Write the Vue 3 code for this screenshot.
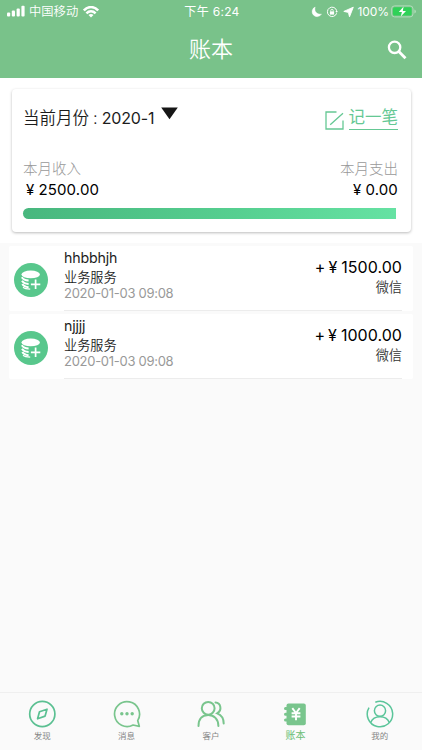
<script setup>
const records = [
  { name: 'hhbbhjh', type: '业务服务', time: '2020-01-03 09:08', amount: '1500.00', channel: '微信' },
  { name: 'njjjj', type: '业务服务', time: '2020-01-03 09:08', amount: '1000.00', channel: '微信' },
]
const tabs = [
  { key: 'discover', label: '发现' },
  { key: 'message', label: '消息' },
  { key: 'customer', label: '客户' },
  { key: 'ledger', label: '账本', active: true },
  { key: 'mine', label: '我的' },
]
</script>

<template>
  <div class="screen">
    <header class="header">
      <div class="status">
        <div class="status-left">
          <svg class="signal" width="18" height="12" viewBox="0 0 18 12" fill="#fff">
            <rect x="0" y="7.6" width="3.2" height="4" rx="1" /><rect x="4.8" y="5.6" width="3.2" height="6" rx="1" />
            <rect x="9.6" y="3.4" width="3.2" height="8.2" rx="1" /><rect x="14.4" y="0.8" width="3.2" height="10.8" rx="1" />
          </svg>
          <span class="carrier">中国移动</span>
          <svg width="16" height="12" viewBox="0 0 16 12" fill="none" stroke="#fff" stroke-width="2.5">
            <path d="M.8 4.500C5-.1 11-.1 15.200 4.500" /><path d="M3.400 7.300C6.100 4.600 9.900 4.600 12.600 7.300" />
            <path d="M8 11.500L5.500 9Q8 6.800 10.500 9Z" fill="#fff" stroke="none" />
          </svg>
        </div>
        <div class="clock">下午 6:24</div>
        <div class="status-right">
          <svg width="11" height="12" viewBox="0 0 11 12"><path d="M4.200 1A5 5 0 1 0 10.500 8C7 9 2.600 6 4.200 1Z" fill="#fff" stroke="#fff" stroke-width=".4" /></svg>
          <svg class="lock" width="12" height="12" viewBox="0 0 12 12" fill="none" stroke="#fff">
            <path d="M10.600 7.300A4.700 4.700 0 1 1 10.700 4.800" /><path d="M9.300 5.100h2.500l-1 1.700z" fill="#fff" stroke="none" />
            <rect x="3.900" y="5.400" width="4.200" height="3.200" fill="#fff" stroke="none" /><path d="M4.800 5.600V4.500a1.200 1.200 0 0 1 2.400 0v1.100" stroke-width=".8" />
          </svg>
          <svg class="arrow" width="11" height="12" viewBox="0 0 11 12"><path d="M10.300 1.200L6.500 10.800L5.400 6.400L.8 5.400Z" fill="#fff" stroke="#fff" stroke-width=".9" stroke-linejoin="round" /></svg>
          <span class="percent">100%</span>
          <svg class="battery" width="26" height="13" viewBox="0 0 26 13">
            <rect x=".6" y=".9" width="21.400" height="11" rx="3" fill="none" stroke="#b2dcba" stroke-width="1" />
            <rect x="2" y="2.300" width="18.600" height="8.200" rx="1.600" fill="#30d158" />
            <path d="M23.400 4.500v4q1.500-.7 1.500-2t-1.500-2z" fill="#b2dcba" />
            <path d="M12.600 1.500L7.800 7H10.900L9.800 11.600L15 5.900H11.800Z" fill="#fff" />
          </svg>
        </div>
      </div>
      <div class="titlebar">
        <h1>账本</h1>
        <svg class="search" width="20" height="20" viewBox="0 0 20 20" fill="none" stroke="#fff">
          <circle cx="7.600" cy="7.300" r="5.700" stroke-width="2.300" /><path d="M11.800 11.500L18.500 18.200" stroke-width="2.800" />
        </svg>
      </div>
    </header>

    <section class="summary">
      <div class="card">
        <div class="month-row">
          <div class="month">当前月份<span class="colon">:</span><span class="date">2020-1</span>
            <svg class="caret" width="17" height="13" viewBox="0 0 17 13"><path d="M.2.4H16.800L8.500 12.200Z" fill="#161616" /></svg>
          </div>
          <div class="add">
            <svg width="19" height="19" viewBox="0 0 19 19" fill="none" stroke="#65c894" stroke-width="1.300">
              <path d="M11.500 1H1V18H18V9.500M5.200 13.800L18 2.200" />
            </svg>
            <span class="add-text">记一笔</span>
          </div>
        </div>
        <div class="totals">
          <div><div class="label">本月收入</div><div class="sum"><span class="yen">¥</span>2500.00</div></div>
          <div class="right"><div class="label">本月支出</div><div class="sum"><span class="yen">¥</span>0.00</div></div>
        </div>
        <div class="bar"></div>
      </div>
    </section>

    <main class="list">
      <article v-for="r in records" :key="r.name" class="item">
        <svg class="coin" width="34" height="34" viewBox="0 0 34 34">
          <circle cx="17" cy="17" r="17" fill="#58c78c" />
          <ellipse cx="16.700" cy="11.400" rx="9.200" ry="3.900" fill="#fff" />
          <g fill="none" stroke="#fff" stroke-width="2">
            <path d="M7.800 14.300Q9.800 17.400 14.600 17.500" /><path d="M8 17.700Q9.800 20.700 14.600 20.900" />
            <path d="M8.300 21.100Q10 24 14.600 24.200" /><path d="M9 24.300Q11 26 16.200 26.200" stroke-width="1.300" />
            <path d="M16.900 21.300H26.300M21.600 16.600V26" stroke-width="1.700" />
          </g>
        </svg>
        <div class="detail">
          <div class="info">
            <div class="name">{{ r.name }}</div>
            <div class="type">{{ r.type }}</div>
            <div class="time">{{ r.time }}</div>
          </div>
          <div class="pay">
            <div class="amount">+<span class="yen">¥</span>{{ r.amount }}</div>
            <div class="channel">{{ r.channel }}</div>
          </div>
        </div>
      </article>
    </main>

    <nav class="tabs">
      <div v-for="t in tabs" :key="t.key" class="tab" :class="{ active: t.active }">
        <svg v-if="t.key === 'discover'" width="28" height="28" viewBox="0 0 28 28" fill="none" stroke="#5bc092" stroke-width="1.700">
          <circle cx="14.300" cy="14" r="12.600" /><path d="M19 9.200L17.100 16.100L9.600 18.800L11.500 11.800Z" stroke-linejoin="round" />
        </svg>
        <svg v-else-if="t.key === 'message'" width="28" height="28" viewBox="0 0 28 28" fill="none" stroke="#79c58d" stroke-width="1.700">
          <path d="M24.700 20.600A12.500 12.500 0 1 0 20.100 25L26.300 26.300Z" stroke-linejoin="round" />
          <g fill="#79c58d" stroke="none"><circle cx="8.800" cy="13.700" r="1.700" /><circle cx="14" cy="13.700" r="1.700" /><circle cx="19.200" cy="13.700" r="1.700" /></g>
        </svg>
        <svg v-else-if="t.key === 'customer'" width="28" height="28" viewBox="0 0 28 28" fill="none" stroke="#79c58d" stroke-width="2" stroke-linecap="round">
          <circle cx="11.200" cy="8.300" r="6.400" /><path d="M1.500 26C1.500 18.600 5.500 15 11.200 15S21.400 19 21.400 26M18.500 2.600C23.800 3 25.500 9.900 20.200 13.400C24.500 15.100 26.700 18.300 26.700 23.500" />
        </svg>
        <svg v-else-if="t.key === 'ledger'" class="book" width="28" height="28" viewBox="0 0 28 28">
          <rect x="5.500" y="3.500" width="19.300" height="21.700" rx="2" fill="#79c58d" />
          <path d="M4.500 8.500H6.500M4.500 14.200H6.500M4.500 20H6.500" stroke="#79c58d" stroke-width="3" stroke-linecap="round" />
          <path d="M11.300 8.200L15 13L18.700 8.200M15 13V20.300M10.600 13.200H19.400M10.600 16.500H19.400" fill="none" stroke="#fff" stroke-width="1.900" />
        </svg>
        <svg v-else width="28" height="28" viewBox="0 0 28 28" fill="none" stroke="#5bc59a" stroke-width="1.500">
          <path d="M9.300 2.300A12.700 12.700 0 1 1 3 7.700" /><circle cx="14" cy="10.700" r="5.600" /><path d="M4.700 22.500C7.800 14.800 20.200 14.800 23.300 22.500" />
        </svg>
        <span>{{ t.label }}</span>
      </div>
    </nav>
  </div>
</template>

<style>
body { margin: 0; }
</style>

<style scoped>
* { box-sizing: border-box; }
.screen { width: 422px; height: 750px; display: flex; flex-direction: column; background: #fafafa; color: #1c1c1c; font-family: Inter, "Noto Sans CJK SC", sans-serif; white-space: nowrap; overflow: hidden; }
svg { display: block; flex: none; }
.header { height: 78px; background: #79c28a; color: #fff; flex: none; }
.status { height: 22px; padding: 0 5px 0 7px; display: grid; grid-template-columns: 1fr auto 1fr; align-items: center; font-size: 12px; line-height: 22px; }
.status-left, .status-right { display: flex; align-items: center; }
.signal { margin-top: -1px; }
.carrier { font-size: 12.300px; font-weight: 350; margin: 1px 5px 0 4px; }
.clock { font-size: 12px; font-weight: 400; letter-spacing: .3px; padding-top: 1px; }
.status-right { justify-content: flex-end; }
.lock { margin-left: 4px; }
.arrow { margin-left: 5px; }
.percent { margin: 0 2px 0 3px; font-size: 12px; letter-spacing: -.05px; }
.titlebar { height: 56px; display: grid; grid-template-columns: 1fr auto 1fr; align-items: center; padding: 0 15px; }
h1 { grid-column: 2; margin: -2px 0 0; font-size: 22px; line-height: 32px; font-weight: 350; }
.search { justify-self: end; }
.summary { height: 165px; padding: 11px 11px 0 12px; background: #fff; flex: none; }
.card { height: 143px; padding: 17px 12px 0 11px; border-radius: 4px; background: #fff; box-shadow: 0 1px 3px rgba(0, 0, 0, .27); }
.month-row { height: 52px; display: flex; justify-content: space-between; }
.month { display: flex; height: 24px; line-height: 24px; font-size: 16.500px; font-weight: 350; }
.colon { margin: 0 4px 0 4px; }
.date { font-size: 16px; font-weight: 400; letter-spacing: -.15px; }
.caret { margin: 1px 0 0 7px; }
.add { display: flex; color: #65c894; margin-right: 1px; }
.add svg { margin: 5px 5px 0 0; }
.add-text { height: 24px; font-size: 16.500px; font-weight: 400; line-height: 22px; border-bottom: 1.500px solid #65c894; }
.totals { display: flex; justify-content: space-between; }
.right { text-align: right; margin-right: 1px; }
.label { font-size: 14.500px; line-height: 22px; color: #999; font-weight: 300; }
.sum { font-size: 15px; line-height: 20px; font-weight: 400; letter-spacing: .15px; color: #000; }
.yen { margin: 0 4px 0 3px; }
.bar { height: 11px; margin: 8px 3px 0 0; border-radius: 6px 0 0 6px; background: linear-gradient(90deg, #48b77e, #56cf90 57%, #66e2a3); }
.list { padding: 3px 9px 0; display: flex; flex-direction: column; gap: 3px; flex: 1; }
.item { height: 65px; padding: 0 11px 0 5px; display: flex; align-items: flex-start; background: #fff; border-radius: 2px; }
.coin { margin-top: 17px; }
.detail { flex: 1; height: 65px; margin-left: 16px; display: flex; justify-content: space-between; border-bottom: 1px solid #ececec; }
.name { font-size: 14.200px; line-height: 20px; padding-top: 2px; height: 22px; letter-spacing: -.15px; }
.type { font-size: 13.200px; line-height: 18px; font-weight: 350; }
.time { font-size: 13px; line-height: 15px; color: #999; letter-spacing: -.28px; }
.pay { padding-top: 11px; text-align: right; }
.amount { font-size: 16px; font-weight: 400; line-height: 20px; letter-spacing: .05px; color: #000; }
.channel { font-size: 13.200px; line-height: 20px; color: #333; font-weight: 350; }
.tabs { height: 58px; display: grid; grid-template-columns: repeat(5, 1fr); border-top: 1px solid #efefef; background: #fafafa; flex: none; }
.tab { display: flex; flex-direction: column; align-items: center; padding-top: 7px; font-size: 8.500px; line-height: 14px; color: #858585; }
.tab span { margin-top: 1px; }
.tab.active { color: #68bd73; font-size: 10px; }
.tab.active span { margin-top: 0; }
</style>
